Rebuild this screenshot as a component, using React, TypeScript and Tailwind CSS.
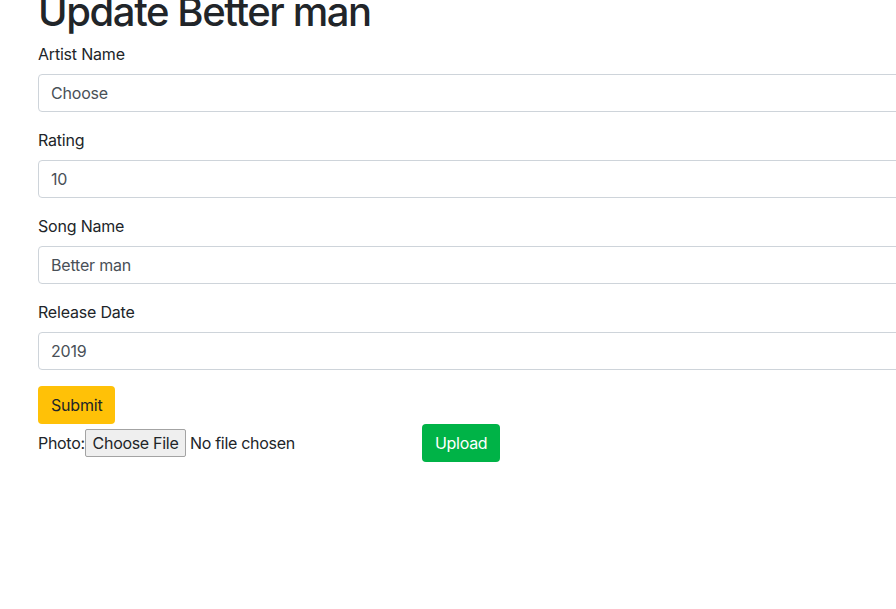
const font = { fontFamily: 'Inter, "Noto Sans", sans-serif' };

function Field({ label, value }: { label: string; value: string }) {
    return (
        <div className="mb-4">
            <label className="block text-[16px] leading-6 text-[#212529] mb-2 tracking-[-0.2px]">{label}</label>
            <div className="w-[900px] h-[38px] border border-[#ced4da] rounded-[4px] flex items-center px-3 text-[16px] text-[#495057] bg-white tracking-[-0.2px]">
                {value}
            </div>
        </div>
    );
}

export default function App() {
    return (
        <div className="w-[896px] h-[609px] overflow-hidden bg-white" style={font}>
            <div className="pl-[38px] -mt-[14px]">
                <h1 className="text-[40px] leading-[48px] font-medium text-[#212529] tracking-[-1.4px] pt-[2px] mb-[6px]">Update Better man</h1>
                <Field label="Artist Name" value="Choose" />
                <Field label="Rating" value="10" />
                <Field label="Song Name" value="Better man" />
                <Field label="Release Date" value="2019" />
                <button className="h-[38px] px-[13px] rounded-[4px] bg-[#ffc107] text-[#212529] text-[16px] tracking-[-0.2px]">Submit</button>
                <div className="flex items-center h-[38px] tracking-[-0.3px]">
                    <span className="w-[47px] text-[16px] text-[#212529]">Photo:</span>
                    <span className="w-[337px] flex items-center">
                        <span className="h-[28px] w-[101px] justify-center flex items-center border border-[#a3a3a3] bg-[#efefef] rounded-[2px] text-[16px] text-[#212529]">Choose File</span>
                        <span className="ml-1 text-[16px] text-[#212529]">No file chosen</span>
                    </span>
                    <button className="h-[38px] px-[13px] rounded-[4px] bg-[#00b347] text-white text-[16px]">Upload</button>
                </div>
            </div>
        </div>
    );
}
